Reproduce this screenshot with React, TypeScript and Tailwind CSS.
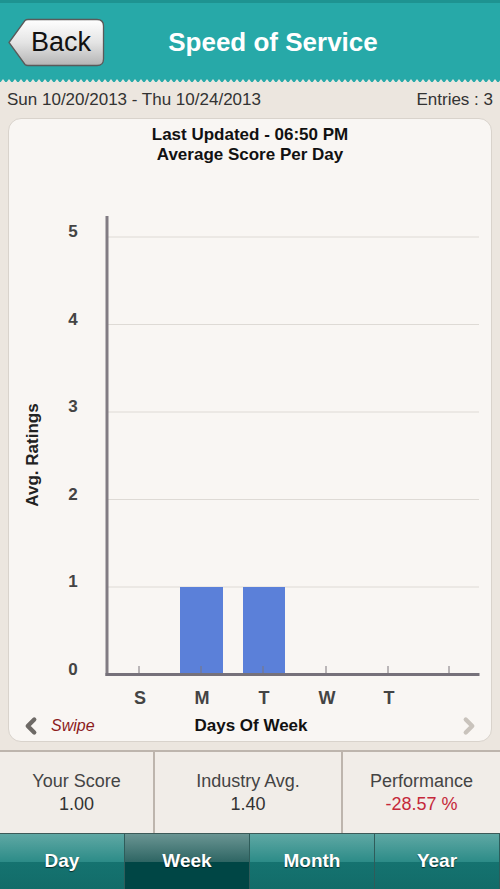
import { ChevronLeft, ChevronRight } from "lucide-react";

const gridRows = [
  { v: 5, y: 119 },
  { v: 4, y: 206.5 },
  { v: 3, y: 294 },
  { v: 2, y: 381.5 },
  { v: 1, y: 469 },
  { v: 0, y: 556.5 },
];

const ticks = [130, 192, 254, 317, 379, 440];
const days = ["S", "M", "T", "W", "T"];

const stats = [
  { label: "Your Score", value: "1.00", tone: "text-[#333]" },
  { label: "Industry Avg.", value: "1.40", tone: "text-[#333]" },
  { label: "Performance", value: "-28.57 %", tone: "text-[#c5283a]" },
];

const tabs = ["Day", "Week", "Month", "Year"];

function BackButton() {
  return (
    <button className="relative w-[97px] h-[49px]">
      <svg className="absolute inset-0" width="97" height="49" viewBox="0 0 97 49">
        <defs>
          <linearGradient id="backGrad" x1="0" y1="0" x2="0" y2="1">
            <stop offset="0" stopColor="#ffffff" />
            <stop offset="0.5" stopColor="#e4e4e4" />
            <stop offset="1" stopColor="#b4b4b4" />
          </linearGradient>
        </defs>
        <path
          d="M1 24.5 L17 2.5 Q18 1.5 20 1.5 L89 1.5 Q95.5 1.5 95.5 8 L95.5 41 Q95.5 47.5 89 47.5 L20 47.5 Q18 47.5 17 46.5 Z"
          fill="url(#backGrad)"
          stroke="#5a5a5a"
          strokeWidth="1.3"
        />
      </svg>
      <span className="relative block pl-[23px] pr-[4px] text-[27px] leading-[49px] text-[#111] text-left">Back</span>
    </button>
  );
}

function Chart() {
  return (
    <svg width="484" height="590" viewBox="0 0 484 590" className="block">
      {gridRows.map((r) =>
        r.v > 0 ? <line key={r.v} x1="99" x2="470" y1={r.y} y2={r.y} stroke="#dedad5" strokeWidth="1" /> : null
      )}
      {gridRows.map((r) => (
        <text key={"l" + r.v} x="64" y={r.y} textAnchor="middle" fontSize="17" fontWeight="700" fill="#444">
          {r.v}
        </text>
      ))}
      <rect x="171" y="469" width="43" height="87" fill="#5b80d9" />
      <rect x="234" y="469" width="42" height="87" fill="#5b80d9" />
      {ticks.map((x) => (
        <line key={x} x1={x} x2={x} y1="548" y2="555" stroke="#7c777c" strokeWidth="1" />
      ))}
      <rect x="96.5" y="98" width="3" height="460" fill="#827c83" />
      <rect x="96.5" y="555" width="374" height="3" fill="#76717a" />
      {days.map((d, i) => (
        <text key={i} x={ticks[i] + 1} y="586" textAnchor="middle" fontSize="18" fontWeight="700" fill="#444">
          {d}
        </text>
      ))}
      <text
        x="25"
        y="337"
        transform="rotate(-90 25 337)"
        textAnchor="middle"
        dominantBaseline="middle"
        fontSize="17"
        fontWeight="700"
        fill="#222"
      >
        Avg. Ratings
      </text>
    </svg>
  );
}

export default function App() {
  return (
    <div
      className="w-[500px] h-[889px] flex flex-col bg-[#ece6df] overflow-hidden"
      style={{ fontFamily: "'Liberation Sans', Arial, sans-serif" }}
    >
      {/* Header */}
      <div className="relative h-[82px] bg-[#27a9a8] border-t-[3px] border-[#1e9391] flex items-center px-[8px]">
        <BackButton />
        <h1 className="absolute left-[46px] right-0 text-center top-[20px] text-[26px] font-bold text-white">
          Speed of Service
        </h1>
        <svg className="absolute left-0 -bottom-px" width="500" height="5" viewBox="0 0 500 5">
          <defs>
            <pattern id="zig" width="6" height="5" patternUnits="userSpaceOnUse">
              <path d="M0 5 L3 1 L6 5 Z" fill="#ece6df" />
            </pattern>
          </defs>
          <rect width="500" height="5" fill="url(#zig)" />
        </svg>
      </div>

      {/* Date row */}
      <div className="h-[36px] flex items-center justify-between px-[7px] text-[17px] text-[#333]">
        <span>Sun 10/20/2013 - Thu 10/24/2013</span>
        <span>Entries : 3</span>
      </div>

      {/* Card */}
      <div className="mx-[8px] h-[625px] rounded-[13px] bg-[#f9f6f3] border border-[#d9d3cc] flex flex-col">
        <div className="pt-[6px] text-center text-[17px] font-bold leading-[20px] text-[#111]">
          <p>Last Updated - 06:50 PM</p>
          <p>Average Score Per Day</p>
        </div>
        <div className="-mt-[47px]">
          <Chart />
        </div>
        <div className="relative flex items-center h-[30px] mt-[3px]">
          <ChevronLeft size={26} strokeWidth={4} className="ml-[9px] text-[#6e6a66]" />
          <span className="ml-[7px] italic text-[16px] text-[#8c1b1b]">Swipe</span>
          <span className="absolute left-0 right-0 text-center pl-[2px] text-[17px] font-bold text-[#111] pointer-events-none">
            Days Of Week
          </span>
          <ChevronRight size={26} strokeWidth={4} className="ml-auto mr-[9px] text-[#c9c3bc]" />
        </div>
      </div>

      {/* Stats */}
      <div className="mt-[8px] h-[83px] grid grid-cols-[155px_188px_157px] border-t-2 border-[#bdb5ad] bg-[#f1ede8]">
        {stats.map((s, i) => (
          <div
            key={s.label}
            className={`flex flex-col items-center justify-center text-[18px] leading-[23px] text-[#444] ${
              i < 2 ? "border-r-2 border-[#bdb5ad]" : ""
            }`}
          >
            <span>{s.label}</span>
            <span className={s.tone}>{s.value}</span>
          </div>
        ))}
      </div>

      {/* Tabs */}
      <div className="h-[56px] grid grid-cols-4 border-t border-[#3c5a58]">
        {tabs.map((t) => {
          const active = t === "Week";
          return (
            <div
              key={t}
              className={`flex items-center justify-center border-r border-[#2f5c5a] text-[19px] font-bold text-white [text-shadow:0_1px_1px_rgba(0,0,0,0.6)] ${
                active
                  ? "bg-[linear-gradient(#6a9593,#2f6664_50%,#004645_50%,#004645)]"
                  : "bg-[linear-gradient(#5fa8a4,#2d8c88_50%,#157370_50%,#126c69)]"
              }`}
            >
              {t}
            </div>
          );
        })}
      </div>
    </div>
  );
}
